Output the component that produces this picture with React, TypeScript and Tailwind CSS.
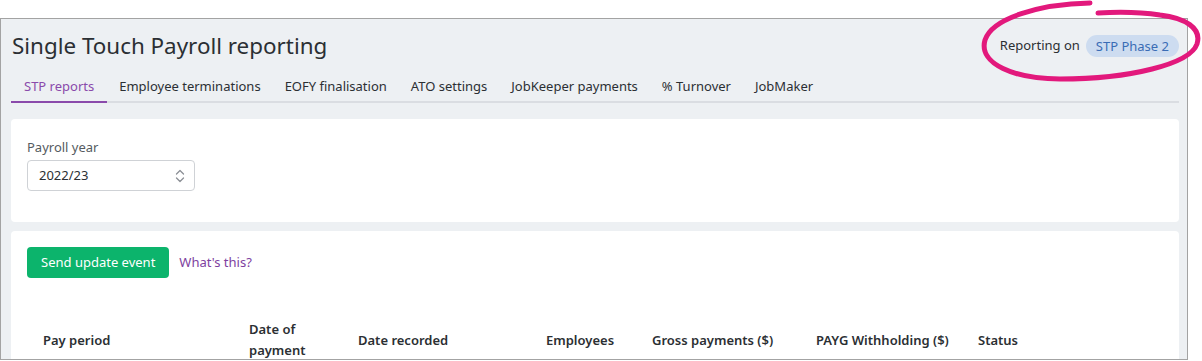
import React from "react";

const tabs = [
  "STP reports",
  "Employee terminations",
  "EOFY finalisation",
  "ATO settings",
  "JobKeeper payments",
  "% Turnover",
  "JobMaker",
];

export default function App() {
  return (
    <div
      className="relative h-[361px] w-[1202px] overflow-hidden bg-white"
      style={{ fontFamily: '"Noto Sans", "Open Sans", sans-serif' }}
    >
      <div className="mt-[18px] h-[342px] w-[1188px] overflow-hidden border border-[#a3a3a3] bg-[#edf0f3] pl-[10px] pr-[8px]">
        {/* Header */}
        <div className="flex items-center justify-between pt-[12px]">
          <h1 className="pl-[1px] text-[22.4px] leading-[30px] text-[#2b2f33]">
            Single Touch Payroll reporting
          </h1>
          <div className="flex items-center gap-[6px] text-[13px] text-[#2b2f33]">
            <span>Reporting on</span>
            <span className="rounded-full bg-[#cddcf0] px-[10px] py-[2px] leading-[18px] text-[#3a6cb5]">
              STP Phase 2
            </span>
          </div>
        </div>
        {/* Tabs */}
        <div className="mt-[15px] flex border-b-2 border-[#dadde2] text-[13px] leading-[20px]">
          {tabs.map((t, i) => (
            <div
              key={t}
              className={
                i === 0
                  ? "-mb-[2px] border-b-2 border-[#8a4aab] px-[13px] pb-[5px] text-[#8a4aab]"
                  : "px-[12px] pb-[5px] text-[#2b2f33]"
              }
            >
              {t}
            </div>
          ))}
        </div>
        {/* Card 1 */}
        <div className="mt-[16px] h-[103px] rounded-[4px] bg-white px-[16px] pt-[18px]">
          <div className="text-[13px] leading-[20px] text-[#555b61]">Payroll year</div>
          <div className="mt-[3px] flex h-[31px] w-[168px] items-center justify-between rounded-[4px] border border-[#cfd2d6] pl-[11px] pr-[8px] text-[13px] text-[#2b2f33]">
            <span>2022/23</span>
            <svg width="12" height="16" viewBox="0 0 12 16" fill="none" stroke="#8c9096" strokeWidth="1.3" strokeLinecap="round" strokeLinejoin="round">
              <path d="M2.5 6 L6 2.5 L9.5 6" />
              <path d="M2.5 10 L6 13.5 L9.5 10" />
            </svg>
          </div>
        </div>
        {/* Card 2 */}
        <div className="mt-[9px] h-[140px] rounded-t-[4px] bg-white">
          <div className="flex items-center gap-[10px] px-[16px] pt-[16px]">
            <button className="h-[31px] rounded-[4px] bg-[#0cb46c] px-[14px] text-[13px] text-white">
              Send update event
            </button>
            <span className="text-[13px] text-[#7e3fa0]">What's this?</span>
          </div>
          <div className="mt-[31px] flex h-[62px] items-center text-[13px] font-semibold leading-[21px] text-[#2b2f33]">
            <div className="w-[238px] pl-[32px]">Pay period</div>
            <div className="w-[109px]">
              Date of
              <br />
              payment
            </div>
            <div className="w-[188px]">Date recorded</div>
            <div className="w-[106px]">Employees</div>
            <div className="w-[164px]">Gross payments ($)</div>
            <div className="w-[162px]">PAYG Withholding ($)</div>
            <div>Status</div>
          </div>
        </div>
      </div>
      {/* Annotation */}
      <svg
        className="pointer-events-none absolute left-0 top-0"
        width="1202"
        height="361"
        viewBox="0 0 1202 361"
        fill="none"
      >
        <path
          d="M1090 3 C1040 4 992 18 985 40 C978 64 1015 79 1060 79 C1130 79 1190 64 1197 44 C1202 28 1185 18 1160 15 C1140 12 1115 12 1098 13"
          stroke="#e2197c"
          strokeWidth="5"
          strokeLinecap="round"
        />
      </svg>
    </div>
  );
}
